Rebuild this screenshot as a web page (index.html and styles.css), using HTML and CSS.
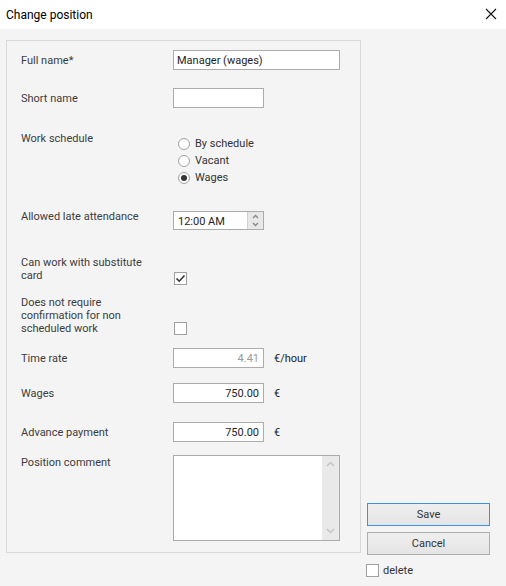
FILE: index.html
```html
<!DOCTYPE html>
<html>
<head>
<meta charset="utf-8">
<link rel="stylesheet" href="styles.css">
</head>
<body>
<div class="window">
  <div class="titlebar">
    <span class="title">Change position</span>
    <svg class="close" width="12" height="12" viewBox="0 0 12 12"><path d="M1 1 L11 11 M11 1 L1 11" stroke="#111" stroke-width="1.1" fill="none"/></svg>
  </div>
  <div class="content">
    <div class="panel">
      <div class="form">
        <div class="label mid">Full name*</div>
        <div class="ctl"><div class="input wide">Manager (wages)</div></div>

        <div class="label mid">Short name</div>
        <div class="ctl"><div class="input short"></div></div>

        <div class="label">Work schedule</div>
        <div class="ctl">
          <div class="radios">
            <div class="radio"><span class="circle"></span>By schedule</div>
            <div class="radio"><span class="circle"></span>Vacant</div>
            <div class="radio"><span class="circle on"></span>Wages</div>
          </div>
        </div>

        <div class="label">Allowed late attendance</div>
        <div class="ctl">
          <div class="spin">
            <span class="spin-text">12:00 AM</span>
            <span class="spin-btns">
              <svg width="15" height="17" viewBox="0 0 15 17"><path d="M5 6 L7.5 3.5 L10 6" stroke="#8a8a8a" stroke-width="1.4" fill="none"/><path d="M5 11 L7.5 13.5 L10 11" stroke="#8a8a8a" stroke-width="1.4" fill="none"/></svg>
            </span>
          </div>
        </div>

        <div class="label">Can work with substitute<br>card</div>
        <div class="ctl"><span class="check cb1"><svg width="11" height="11" viewBox="0 0 11 11"><path d="M1.5 5.5 L4.2 8.2 L9.5 2.5" stroke="#333" stroke-width="1.6" fill="none"/></svg></span></div>

        <div class="label">Does not require<br>confirmation for non<br>scheduled work</div>
        <div class="ctl"><span class="check cb2"></span></div>

        <div class="label mid">Time rate</div>
        <div class="ctl row"><div class="input short num dim">4.41</div><span class="unit">€/hour</span></div>

        <div class="label mid">Wages</div>
        <div class="ctl row"><div class="input short num">750.00</div><span class="unit">€</span></div>

        <div class="label mid">Advance payment</div>
        <div class="ctl row"><div class="input short num">750.00</div><span class="unit">€</span></div>

        <div class="label">Position comment</div>
        <div class="ctl">
          <div class="memo">
            <div class="memo-area"></div>
            <div class="memo-bar">
              <svg width="17" height="84" viewBox="0 0 17 84"><path d="M5 10 L8.5 6.5 L12 10" stroke="#c4c4c4" stroke-width="1.5" fill="none"/><path d="M5 73 L8.5 76.5 L12 73" stroke="#c4c4c4" stroke-width="1.5" fill="none"/></svg>
            </div>
          </div>
        </div>
      </div>
    </div>
    <div class="side">
      <div class="btn primary">Save</div>
      <div class="btn">Cancel</div>
      <div class="del"><span class="check"></span>delete</div>
    </div>
  </div>
</div>
</body>
</html>
```

FILE: styles.css
```css
html, body {
  margin: 0;
  padding: 0;
}
body {
  width: 506px;
  height: 586px;
  background: #f4f4f4;
  font-family: Roboto, "Noto Sans", sans-serif;
  font-size: 11px;
  color: #3c3c3c;
  overflow: hidden;
}
.window {
  width: 506px;
  height: 586px;
}
.titlebar {
  height: 29px;
  background: #ffffff;
  display: flex;
  align-items: center;
  justify-content: space-between;
  padding: 0 9px 0 6px;
  box-sizing: border-box;
}
.title {
  color: #000;
  font-size: 12px;
}
.close {
  display: block;
  margin-top: -1px;
}
.content {
  display: flex;
  align-items: flex-end;
  padding: 11px 0 0 6px;
}
.panel {
  width: 355px;
  height: 513px;
  box-sizing: border-box;
  border: 1px solid #d9d9d9;
  padding: 9px 0 0 14px;
  margin-bottom: 33px;
}
.form {
  display: grid;
  grid-template-columns: 152px 1fr;
  grid-template-rows: 38px 43px 78px 46px 40px 53px 35px 39px 33px 86px;
}
.label {
  line-height: 13px;
  padding-top: 1px;
  white-space: nowrap;
}
.label.mid {
  line-height: 20px;
}
.ctl {
  display: block;
}
.ctl.row {
  display: flex;
  align-items: center;
  height: 20px;
}
.input {
  height: 20px;
  box-sizing: border-box;
  border: 1px solid #acacac;
  background: #fff;
  line-height: 17px;
  padding: 1px 3px 0;
  color: #1e1e1e;
  white-space: nowrap;
}
.input.wide { width: 167px; }
.input.short { width: 91px; }
.input.num { text-align: right; padding-right: 4px; }
.input.dim { color: #9a9a9a; }
.unit {
  margin-left: 10px;
  padding-top: 1px;
  color: #222;
}
.radios {
  padding-top: 4px;
}
.radio {
  height: 17px;
  display: flex;
  align-items: center;
  color: #333;
}
.circle {
  width: 12px;
  height: 12px;
  box-sizing: border-box;
  border: 1px solid #a3a3a3;
  border-radius: 50%;
  background: #fff;
  margin: 0 5px 0 5px;
  display: flex;
  align-items: center;
  justify-content: center;
}
.circle.on::after {
  content: "";
  width: 6px;
  height: 6px;
  border-radius: 50%;
  background: #333;
}
.spin {
  margin-top: 2px;
  width: 91px;
  height: 19px;
  box-sizing: border-box;
  border: 1px solid #acacac;
  background: #fff;
  display: flex;
}
.spin-text {
  flex: 1;
  line-height: 17px;
  padding: 1px 0 0 4px;
  color: #1e1e1e;
}
.spin-btns {
  width: 15px;
  background: #e8e8e8;
  border-left: 1px solid #d0d0d0;
  display: flex;
  align-items: center;
}
.spin-btns svg { display: block; }
.check {
  display: inline-flex;
  align-items: center;
  justify-content: center;
  width: 13px;
  height: 13px;
  box-sizing: border-box;
  border: 1px solid #a0a0a0;
  background: #fff;
}
.cb1 { margin: 17px 0 0 1px; }
.cb2 { margin: 27px 0 0 1px; }
.memo {
  width: 167px;
  height: 86px;
  box-sizing: border-box;
  border: 1px solid #acacac;
  background: #fff;
  display: flex;
}
.memo-area { flex: 1; }
.memo-bar {
  width: 17px;
  background: #e9e9e9;
}
.memo-bar svg { display: block; }
.side {
  margin-left: 6px;
  width: 123px;
  display: flex;
  flex-direction: column;
  padding-bottom: 9px;
}
.btn {
  height: 23px;
  box-sizing: border-box;
  border: 1px solid #adadad;
  background: linear-gradient(#efefef, #e4e4e4);
  text-align: center;
  line-height: 21px;
  color: #333;
  font-size: 11px;
  margin-bottom: 6px;
}
.btn.primary {
  border-color: #3c91e6;
}
.del {
  margin-top: 3px;
  margin-left: -1px;
  display: flex;
  align-items: center;
  height: 13px;
  color: #333;
}
.del .check {
  margin-right: 4px;
}
```
